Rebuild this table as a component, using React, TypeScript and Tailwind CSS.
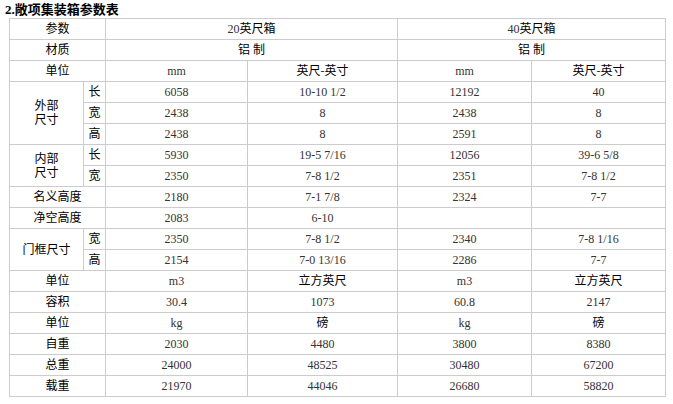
import React from "react";

type Cell = { t: string; cs?: number; rs?: number };

const rows: Cell[][] = [
  [{ t: "参数", cs: 2 }, { t: "20英尺箱", cs: 2 }, { t: "40英尺箱", cs: 2 }],
  [{ t: "材质", cs: 2 }, { t: "铝 制", cs: 2 }, { t: "铝 制", cs: 2 }],
  [{ t: "单位", cs: 2 }, { t: "mm" }, { t: "英尺-英寸" }, { t: "mm" }, { t: "英尺-英寸" }],
  [{ t: "外部\n尺寸", rs: 3 }, { t: "长" }, { t: "6058" }, { t: "10-10 1/2" }, { t: "12192" }, { t: "40" }],
  [{ t: "宽" }, { t: "2438" }, { t: "8" }, { t: "2438" }, { t: "8" }],
  [{ t: "高" }, { t: "2438" }, { t: "8" }, { t: "2591" }, { t: "8" }],
  [{ t: "内部\n尺寸", rs: 2 }, { t: "长" }, { t: "5930" }, { t: "19-5 7/16" }, { t: "12056" }, { t: "39-6 5/8" }],
  [{ t: "宽" }, { t: "2350" }, { t: "7-8 1/2" }, { t: "2351" }, { t: "7-8 1/2" }],
  [{ t: "名义高度", cs: 2 }, { t: "2180" }, { t: "7-1 7/8" }, { t: "2324" }, { t: "7-7" }],
  [{ t: "净空高度", cs: 2 }, { t: "2083" }, { t: "6-10" }, { t: "" }, { t: "" }],
  [{ t: "门框尺寸", rs: 2 }, { t: "宽" }, { t: "2350" }, { t: "7-8 1/2" }, { t: "2340" }, { t: "7-8 1/16" }],
  [{ t: "高" }, { t: "2154" }, { t: "7-0 13/16" }, { t: "2286" }, { t: "7-7" }],
  [{ t: "单位", cs: 2 }, { t: "m3" }, { t: "立方英尺" }, { t: "m3" }, { t: "立方英尺" }],
  [{ t: "容积", cs: 2 }, { t: "30.4" }, { t: "1073" }, { t: "60.8" }, { t: "2147" }],
  [{ t: "单位", cs: 2 }, { t: "kg" }, { t: "磅" }, { t: "kg" }, { t: "磅" }],
  [{ t: "自重", cs: 2 }, { t: "2030" }, { t: "4480" }, { t: "3800" }, { t: "8380" }],
  [{ t: "总重", cs: 2 }, { t: "24000" }, { t: "48525" }, { t: "30480" }, { t: "67200" }],
  [{ t: "载重", cs: 2 }, { t: "21970" }, { t: "44046" }, { t: "26680" }, { t: "58820" }],
];

// latin runs are drawn a little lighter than the CJK labels
function Text({ t }: { t: string }) {
  const parts = t.split(/([\x21-\x7E]+)/).filter(p => p !== "");
  return (
    <>
      {parts.map((p, i) =>
        /^[\x21-\x7E]+$/.test(p) ? (
          <span key={i} className="text-[#333333]">{p}</span>
        ) : (
          <span key={i}>{p}</span>
        )
      )}
    </>
  );
}

export default function App() {
  return (
    <div className="w-[673px] h-[404px] bg-white overflow-hidden">
      <div
        className="pl-[5px] pt-[2px] h-[18px] text-[13px] leading-[16px] font-bold text-black"
        style={{ fontFamily: '"Liberation Serif", "Noto Sans CJK SC", sans-serif' }}
      >
        2.敞项集装箱参数表
      </div>
      <div className="pl-[9px]">
        <table
          className="w-[656px] table-fixed border-collapse text-[12px] text-black"
          style={{ fontFamily: '"Liberation Serif", "Noto Sans CJK SC", serif' }}
        >
          <colgroup>
            <col className="w-[74px]" />
            <col className="w-[22px]" />
            <col className="w-[142px]" />
            <col className="w-[150px]" />
            <col className="w-[134px]" />
            <col className="w-[134px]" />
          </colgroup>
          <tbody>
            {rows.map((r, i) => (
              <tr key={i} className="h-[21px]">
                {r.map((c, j) => (
                  <td
                    key={j}
                    colSpan={c.cs}
                    rowSpan={c.rs}
                    className="border border-[#cccccc] p-0 text-center align-middle leading-[14px] whitespace-pre-line"
                  >
                    <Text t={c.t} />
                  </td>
                ))}
              </tr>
            ))}
          </tbody>
        </table>
      </div>
    </div>
  );
}
